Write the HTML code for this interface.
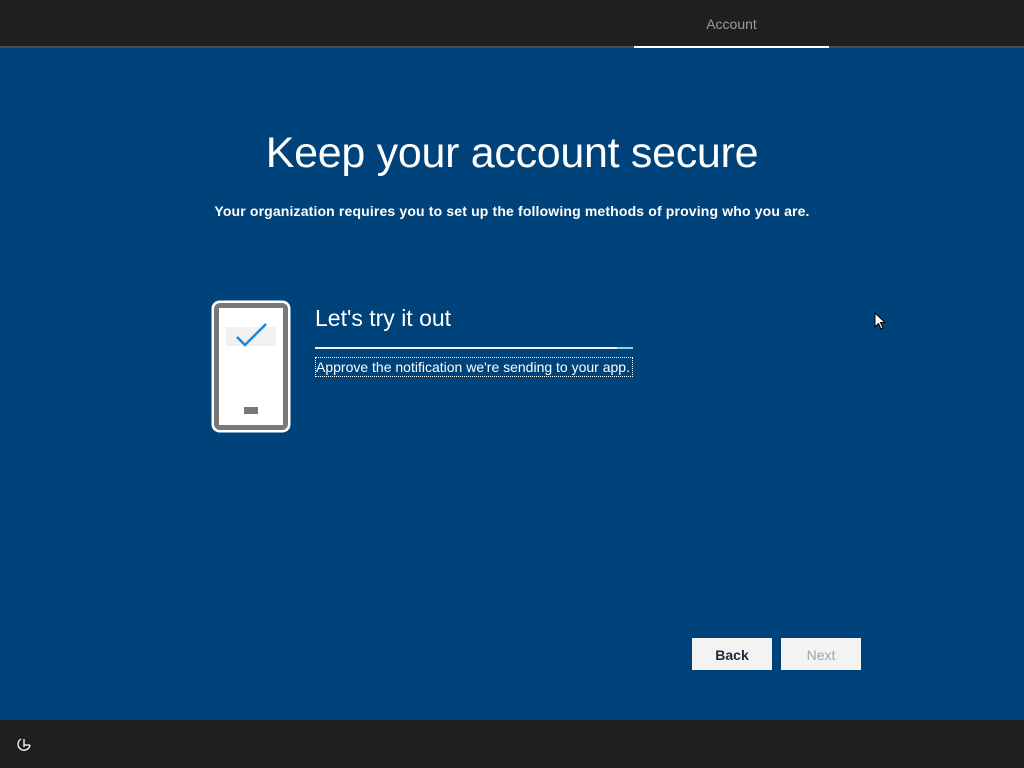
<!DOCTYPE html>
<html><head><meta charset="utf-8"><style>
*{margin:0;padding:0;box-sizing:border-box}
body{width:1024px;height:768px;overflow:hidden;background:#00427a;font-family:"Liberation Sans",sans-serif;position:relative;color:#fff}
.top{position:absolute;left:0;top:0;width:1024px;height:48px;background:#1f1f1f;border-bottom:2px solid #4a4a4a}
.acc{position:absolute;left:634px;top:0;width:195px;height:48px;text-align:center;line-height:48px;font-size:14px;color:#9a9a9a;border-bottom:2px solid #fff}
.bot{position:absolute;left:0;top:720px;width:1024px;height:48px;background:#1f1f1f}
h1{position:absolute;left:0;width:1024px;top:129px;text-align:center;font-weight:300;font-size:43px;letter-spacing:-0.3px}
.sub{position:absolute;left:0;width:1024px;top:203px;text-align:center;font-weight:bold;font-size:14px;letter-spacing:0.15px}
.t2{position:absolute;left:315px;top:305px;font-size:23px;font-weight:300}
.line{position:absolute;left:315px;top:347px;width:318px;height:2px;background:#f0f0f0}
.line i{position:absolute;right:0;top:0;width:16px;height:2px;background:#9ccbe8}
.appr{position:absolute;left:315px;top:357px;width:318px;height:20px;border:1px dotted #fff;font-size:14px;line-height:19px;white-space:nowrap;overflow:hidden}
.btn{position:absolute;top:638px;width:80px;height:32px;background:#f3f3f1;text-align:center;line-height:34px;font-size:14px;font-weight:bold}
</style></head><body>
<div class="top"></div><div class="acc">Account</div>
<h1>Keep your account secure</h1>
<div class="sub">Your organization requires you to set up the following methods of proving who you are.</div>
<svg style="position:absolute;left:210px;top:299px" width="82" height="135" viewBox="0 0 82 135">
<rect x="1.5" y="1.5" width="79" height="132" rx="8" fill="#fff"/>
<rect x="4" y="4" width="74" height="127" rx="6" fill="#787878"/>
<rect x="9" y="9" width="64" height="117" fill="#fff"/>
<rect x="16" y="28" width="50" height="19" fill="#f1f1f1"/>
<path d="M27 38 L35 46 L56 25" stroke="#1a86d9" stroke-width="2.5" fill="none"/>
<rect x="34" y="108" width="14" height="7" fill="#787878"/>
</svg>
<div class="t2">Let's try it out</div>
<div class="line"><i></i></div>
<div class="appr">Approve the notification we're sending to your app.</div>
<div class="btn" style="left:692px;color:#1b2a3a">Back</div>
<div class="btn" style="left:781px;color:#a0a4a8;font-weight:normal">Next</div>
<div class="bot"><svg style="position:absolute;left:15px;top:16px" width="18" height="18" viewBox="0 0 18 18"><path d="M6 3 A6 6 0 1 0 15 9 M9 3 V11 M9 9 H15" stroke="#fff" stroke-width="1.3" fill="none"/></svg></div>
<svg style="position:absolute;left:874px;top:312px" width="14" height="20" viewBox="0 0 14 20"><path d="M1 1 L1 15 L4.5 11.5 L7 17 L9 16 L6.5 10.5 L11 10.5 Z" fill="#fff" stroke="#000" stroke-width="1"/></svg>
</body></html>
